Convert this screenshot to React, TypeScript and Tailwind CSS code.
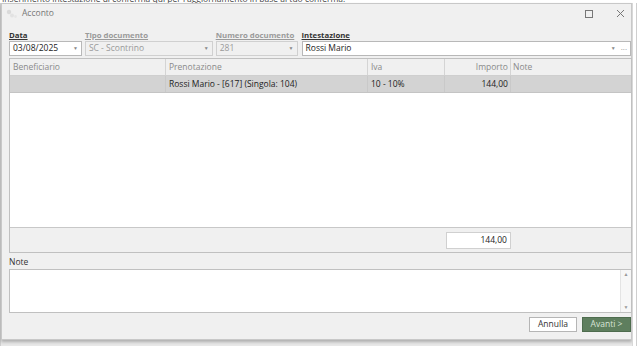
const font = { fontFamily: '"Open Sans", "Noto Sans", sans-serif' };

const Field = ({ w, label, value, disabled, dim }: { w: string; label: string; value: string; disabled?: boolean; dim?: boolean }) => (
  <div className={`flex flex-col ${w}`}>
    <span className={`text-[7.8px] font-bold underline leading-[11px] whitespace-nowrap ${dim ? "text-[#9a9a9a]" : "text-[#333]"}`}>{label}</span>
    <div
      className={`h-[15px] flex items-center justify-between border px-[3px] text-[8.5px] ${
        disabled ? "bg-[#f0f0f0] border-[#d0d0d0] text-[#9a9a9a]" : "bg-white border-[#b8b8b8] text-[#222]"
      }`}
    >
      <span>{value}</span>
      <span className="text-[5px] text-[#888]">▼</span>
    </div>
  </div>
);

export default function App() {
  return (
    <div className="w-[642px] h-[346px] bg-[#e8e8e8] flex flex-col overflow-hidden" style={font}>
      <div className="h-[3px] overflow-hidden bg-white">
        <div className="-mt-[7px] pl-[2px] text-[8.5px] text-[#444] whitespace-nowrap">
          Inserimento intestazione di conferma qui per l'aggiornamento in base al tuo conferma.
        </div>
      </div>
      <div className="flex flex-1">
        <div className="w-[1px] bg-[#cfcfcf]" />
        <div className="w-[631px] h-[337px] bg-[#f0f0f0] border border-[#c8c8c8] flex flex-col shadow-[0_2px_3px_rgba(0,0,0,0.25)]">
          {/* title bar */}
          <div className="h-[19px] flex items-center pl-[4px] pr-[6px]">
            <svg width="12" height="10" viewBox="0 0 12 10" className="mr-[4px]">
              <circle cx="3" cy="3" r="2.2" fill="#dadada" />
              <circle cx="6" cy="6.5" r="2" fill="#e2e2e2" />
              <circle cx="9.5" cy="7.5" r="1.4" fill="#e6e6e6" />
            </svg>
            <span className="text-[8.5px] text-[#777]">Acconto</span>
            <div className="flex-1" />
            <div className="w-[8px] h-[8px] border border-[#777] mr-[23px]" />
            <svg width="9" height="9" viewBox="0 0 9 9">
              <path d="M1 1L8 8M8 1L1 8" stroke="#777" strokeWidth="1" />
            </svg>
          </div>

          {/* fields */}
          <div className="flex pl-[7px] pt-[7px] gap-[3px]">
            <Field w="w-[73px]" label="Data" value="03/08/2025" />
            <Field w="w-[128px]" label="Tipo documento" value="SC - Scontrino" disabled dim />
            <Field w="w-[82px]" label="Numero documento" value="281" disabled dim />
            <div className="flex flex-col w-[330px] ml-[1px]">
              <span className="text-[7.8px] font-bold underline leading-[11px] text-[#333]">Intestazione</span>
              <div className="h-[15px] flex items-center border border-[#b8b8b8] bg-white px-[3px] text-[8.5px] text-[#222]">
                <span className="flex-1">Rossi Mario</span>
                <span className="text-[5px] text-[#888] mr-[5px]">▼</span>
                <span className="text-[8px] text-[#888] leading-none">···</span>
              </div>
            </div>
          </div>

          {/* grid */}
          <div className="ml-[7px] mt-[2px] w-[623px] h-[195px] border border-[#c0c0c0] bg-white flex flex-col text-[8.5px]">
            <div className="h-[17px] flex bg-[#f0f0f0] border-b border-[#cfcfcf] text-[#8a8a8a]">
              <div className="w-[156px] border-r border-[#d4d4d4] pl-[3px] flex items-center">Beneficiario</div>
              <div className="w-[202px] border-r border-[#d4d4d4] pl-[3px] flex items-center">Prenotazione</div>
              <div className="w-[77px] border-r border-[#d4d4d4] pl-[3px] flex items-center">Iva</div>
              <div className="w-[66px] border-r border-[#d4d4d4] pr-[2px] flex items-center justify-end">Importo</div>
              <div className="flex-1 pl-[2px] flex items-center">Note</div>
            </div>
            <div className="h-[17px] flex bg-[#d3d3d3] border-b border-[#c4c4c4] text-[#222]">
              <div className="w-[156px] border-r border-[#c9c9c9]" />
              <div className="w-[202px] border-r border-[#c9c9c9] pl-[3px] flex items-center">Rossi Mario - [617] (Singola: 104)</div>
              <div className="w-[77px] border-r border-[#c9c9c9] pl-[3px] flex items-center">10 - 10%</div>
              <div className="w-[66px] border-r border-[#c9c9c9] pr-[2px] flex items-center justify-end">144,00</div>
              <div className="flex-1" />
            </div>
            <div className="flex-1" />
            <div className="h-[25px] bg-[#f0f0f0] border-t border-[#c8c8c8] flex items-center">
              <div className="ml-[436px] w-[65px] h-[17px] bg-white border border-[#d0d0d0] flex items-center justify-end pr-[3px] text-[#222]">
                144,00
              </div>
            </div>
          </div>

          {/* note */}
          <span className="ml-[7px] mt-[3px] text-[8.5px] text-[#333] leading-[12px]">Note</span>
          <div className="ml-[7px] mt-[1px] w-[623px] h-[44px] border border-[#c0c0c0] bg-white flex justify-end">
            <div className="w-[11px] flex flex-col justify-between items-center py-[1px] bg-[#f7f7f7] border-l border-[#e4e4e4]">
              <span className="text-[5px] text-[#999]">▲</span>
              <span className="text-[5px] text-[#999]">▼</span>
            </div>
          </div>

          {/* buttons */}
          <div className="flex justify-end gap-[5px] mt-[4px]">
            <button className="w-[48px] h-[15px] bg-white border border-[#b5b5b5] text-[8.5px] text-[#333]">Annulla</button>
            <button className="w-[49px] h-[15px] bg-[#5e7e5e] border border-[#4e6c4e] text-[8.5px] text-[#d8e4d8]">Avanti &gt;</button>
          </div>
        </div>
        <div className="flex-1 bg-white border-l border-[#d8d8d8] flex">
          <div className="ml-[3px] w-[1px] bg-[#cfcfcf]" />
        </div>
      </div>
    </div>
  );
}
